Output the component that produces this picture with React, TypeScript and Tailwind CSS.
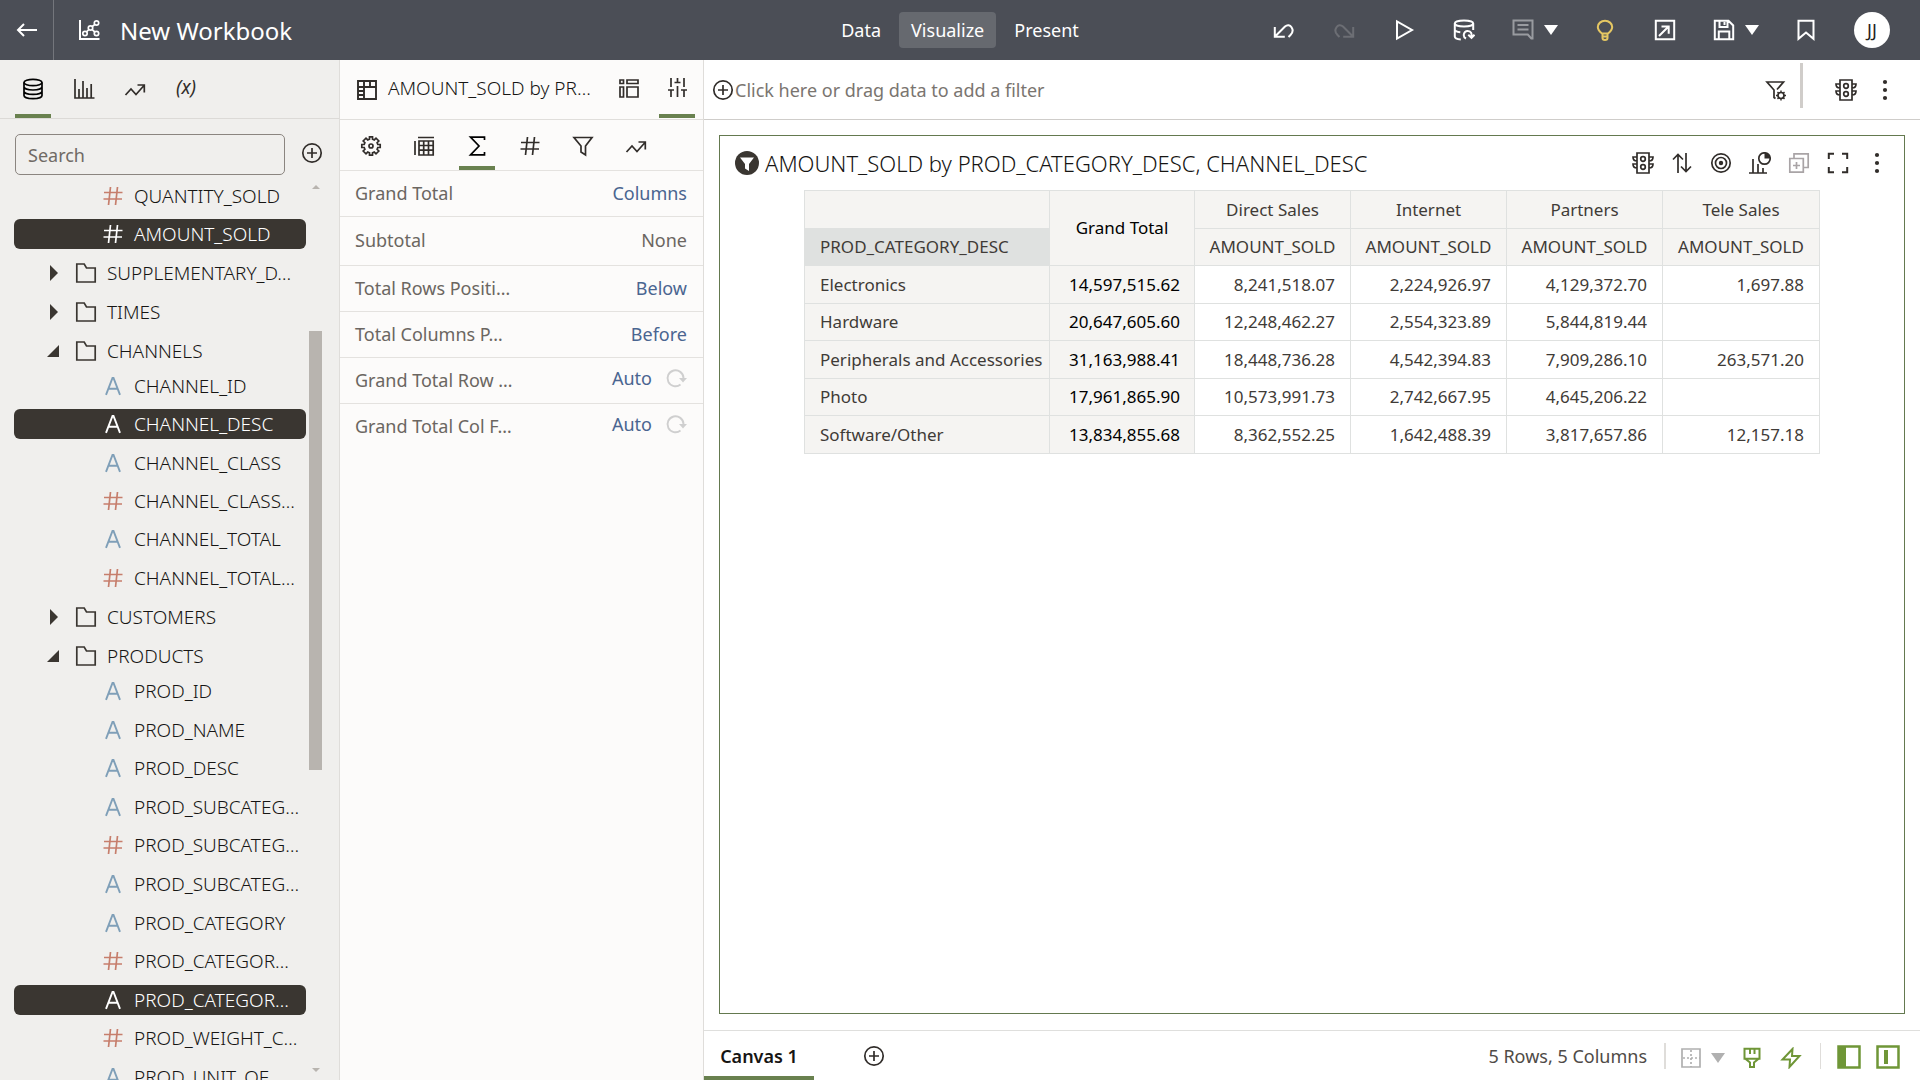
import React from 'react';
import clsx from 'clsx';

type FieldKind = 'text' | 'number';

interface Field {
  name: string;
  kind: FieldKind;
  selected?: boolean;
}

interface Setting {
  label: string;
  value: string;
  muted?: boolean;
  resettable?: boolean;
}

const salesFields: Field[] = [
  { name: 'QUANTITY_SOLD', kind: 'number' },
  { name: 'AMOUNT_SOLD', kind: 'number', selected: true },
];

const channelFields: Field[] = [
  { name: 'CHANNEL_ID', kind: 'text' },
  { name: 'CHANNEL_DESC', kind: 'text', selected: true },
  { name: 'CHANNEL_CLASS', kind: 'text' },
  { name: 'CHANNEL_CLASS…', kind: 'number' },
  { name: 'CHANNEL_TOTAL', kind: 'text' },
  { name: 'CHANNEL_TOTAL…', kind: 'number' },
];

const productFields: Field[] = [
  { name: 'PROD_ID', kind: 'text' },
  { name: 'PROD_NAME', kind: 'text' },
  { name: 'PROD_DESC', kind: 'text' },
  { name: 'PROD_SUBCATEG…', kind: 'text' },
  { name: 'PROD_SUBCATEG…', kind: 'number' },
  { name: 'PROD_SUBCATEG…', kind: 'text' },
  { name: 'PROD_CATEGORY', kind: 'text' },
  { name: 'PROD_CATEGOR…', kind: 'number' },
  { name: 'PROD_CATEGOR…', kind: 'text', selected: true },
  { name: 'PROD_WEIGHT_C…', kind: 'number' },
  { name: 'PROD_UNIT_OF_', kind: 'text' },
];

const settings: Setting[] = [
  { label: 'Grand Total', value: 'Columns' },
  { label: 'Subtotal', value: 'None', muted: true },
  { label: 'Total Rows Positi…', value: 'Below' },
  { label: 'Total Columns P…', value: 'Before' },
  { label: 'Grand Total Row …', value: 'Auto', resettable: true },
  { label: 'Grand Total Col F…', value: 'Auto', resettable: true },
];

const channels = ['Direct Sales', 'Internet', 'Partners', 'Tele Sales'];

const rows = [
  { category: 'Electronics', total: '14,597,515.62', values: ['8,241,518.07', '2,224,926.97', '4,129,372.70', '1,697.88'] },
  { category: 'Hardware', total: '20,647,605.60', values: ['12,248,462.27', '2,554,323.89', '5,844,819.44', ''] },
  { category: 'Peripherals and Accessories', total: '31,163,988.41', values: ['18,448,736.28', '4,542,394.83', '7,909,286.10', '263,571.20'] },
  { category: 'Photo', total: '17,961,865.90', values: ['10,573,991.73', '2,742,667.95', '4,645,206.22', ''] },
  { category: 'Software/Other', total: '13,834,855.68', values: ['8,362,552.25', '1,642,488.39', '3,817,657.86', '12,157.18'] },
];

// ---------- Icons (22px grid) ----------

const Svg = ({ children, className }: { children: React.ReactNode; className?: string }) => (
  <svg
    width="22"
    height="22"
    viewBox="0 0 22 22"
    fill="none"
    stroke="currentColor"
    strokeWidth="1.7"
    className={clsx('shrink-0', className)}
    aria-hidden="true"
  >
    {children}
  </svg>
);

const BackIcon = () => (
  <Svg><path d="M21 11H2M8 5l-6 6 6 6" strokeWidth="2" /></Svg>
);

const WorkbookIcon = () => (
  <Svg>
    <path d="M2 1v19h19.500" strokeWidth="2" />
    <circle cx="7" cy="14.500" r="2.200" />
    <circle cx="12.500" cy="9" r="2.200" />
    <circle cx="18.500" cy="4" r="2.200" />
    <circle cx="18.500" cy="14.500" r="2.200" />
    <path d="M8.500 12.800l2.400-2.300M14.200 7.500L17 5.300M14.200 10.700l2.600 2.300" />
  </Svg>
);

const DatabaseIcon = () => (
  <Svg>
    <ellipse cx="11" cy="4.500" rx="9" ry="3.200" />
    <path d="M2 4.500v13c0 1.800 4 3.200 9 3.200s9-1.400 9-3.200v-13M2 8.800C2 10.600 6 12 11 12s9-1.400 9-3.200M2 13.200c0 1.800 4 3.200 9 3.200s9-1.400 9-3.200" />
  </Svg>
);

const BarsIcon = () => (
  <Svg><path d="M2 1v19h19.500M6 20v-9M10 20V3M14 20V10M18.200 20V6" /></Svg>
);

const TrendIcon = () => (
  <Svg><path d="M1.500 17l5.500-6 5 5.500 8-9M13.500 7H20.300v7.500" /></Svg>
);

const PlusCircleIcon = () => (
  <Svg>
    <circle cx="11" cy="11" r="9.200" />
    <path d="M11 6v10M6 11h10" />
  </Svg>
);

const FolderIcon = () => (
  <Svg><path d="M1.800 20V2h7.400l2.300 4h8.700v14z" /></Svg>
);

const HashIcon = () => (
  <Svg><path d="M8.500 2L6.500 20M15.500 2l-2 18M2 7.500h18.500M1.500 14h18.500" /></Svg>
);

const LetterIcon = () => (
  <Svg><path d="M4 19.800L10.500 3h1L18 19.800M6.300 13.800h9.400" strokeWidth="1.900" /></Svg>
);

const PivotIcon = () => (
  <Svg>
    <path d="M2 2h18v18H2zM8 2v18M2 8h18M14 2v6M2 12h6M2 16h6" strokeWidth="1.900" />
  </Svg>
);

const GrammarIcon = () => (
  <Svg><path d="M2 3h3.500v3.500H2zM9 3h11v3.500H9zM2 10h3.500v10H2zM9 10h11v10H9z" /></Svg>
);

const SlidersIcon = () => (
  <Svg><path d="M5 2v9M5 14.500V21M11.500 2v4M11.500 10v11M18 2v9M18 14.500V21M2 14h6M8.500 6.500h6M15 14h6" /></Svg>
);

const GearIcon = () => (
  <Svg>
    <path d="M9.500 1.800h3v2.400l1.800.7L16 3.200 18.800 6l-1.700 1.700.7 1.800h2.400v3h-2.400l-.7 1.800 1.700 1.700-2.800 2.800-1.700-1.700-1.800.7v2.400h-3v-2.400l-1.800-.7L6 18.800 3.200 16l1.700-1.700-.7-1.800H1.800v-3h2.400l.7-1.800L3.200 6 6 3.200l1.700 1.700 1.800-.7z" />
    <circle cx="11" cy="11" r="2" />
  </Svg>
);

const TableIcon = () => (
  <Svg><path d="M2 6v14M5 2.500h16M6 6h14.200v14H6zM6 10.500h14M6 15.200h14M10.700 6v14M15.500 6v14" /></Svg>
);

const SigmaIcon = () => (
  <Svg><path d="M18.500 5V2.200H4.500L13 11l-8.500 8.800h14V17" /></Svg>
);

const FunnelIcon = () => (
  <Svg><path d="M2 2.500h18l-6.500 8.500v9l-4.500-3v-6z" /></Svg>
);

const FunnelGearIcon = () => (
  <Svg>
    <path d="M12 10.500L18.500 3H2l7 8v7.500l1.500 1" />
    <circle cx="16" cy="16.500" r="3" />
    <path d="M16 11.500v2M16 19.500v2M11 16.500h2M19 16.500h2M12.500 13l1.400 1.400M18.100 18.600l1.400 1.400M19.500 13l-1.400 1.400M13.900 18.600L12.500 20" strokeWidth="1.400" />
  </Svg>
);

const TrafficIcon = () => (
  <Svg>
    <path d="M5 1h12v20H5zM5 5H1c0 3 1.500 4 4 4M5 12H1c0 3 1.500 4 4 4M17 5h4c0 3-1.500 4-4 4M17 12h4c0 3-1.500 4-4 4" />
    <circle cx="11" cy="7" r="2.300" />
    <circle cx="11" cy="15" r="2.300" />
  </Svg>
);

const KebabIcon = () => (
  <Svg>
    <g fill="currentColor" stroke="none">
      <circle cx="11" cy="3" r="2.100" />
      <circle cx="11" cy="11" r="2.100" />
      <circle cx="11" cy="19" r="2.100" />
    </g>
  </Svg>
);

const UndoIcon = ({ flipped }: { flipped?: boolean }) => (
  <Svg className={flipped ? '-scale-x-100' : undefined}>
    <path d="M1.800 8v9.800h10M2.300 17.300L12 7.500c5-4.500 10.500 3.500 5.500 8.500l-2 2" strokeWidth="2" />
  </Svg>
);

const PlayIcon = () => (
  <Svg><path d="M4 2.500v17L19 11z" strokeWidth="2" /></Svg>
);

const RefreshDataIcon = () => (
  <Svg>
    <g strokeWidth="2">
      <ellipse cx="11" cy="4.500" rx="9.200" ry="3" />
      <path d="M1.800 4.500v13c0 1.500 2 2.700 6 3M20.200 4.500V11M1.800 10.500c0 1.500 2 2.300 5.500 2.700" />
      <path d="M13 19.500c-4-2-2-8 2-7.500 3 .2 4 2.500 3.500 6M15.300 15.800l3.200 3 3-3" />
    </g>
  </Svg>
);

const CommentIcon = () => (
  <Svg>
    <path d="M1.500 1.500h19v18h-1.200l-3.500-4H1.500zM5.500 6h11M5.500 10.500h11" strokeWidth="2" />
  </Svg>
);

const BulbIcon = () => (
  <Svg>
    <path d="M8 14.500C5.500 12.500 3.800 11 3.800 8a7.200 6.200 0 0 1 14.400 0c0 3-1.700 4.500-4.200 6.500zM7.500 17.500h7M8.500 14.500v4.500c0 2.500 5 2.500 5 0v-4.500" strokeWidth="2" />
  </Svg>
);

const ExportIcon = () => (
  <Svg><path d="M1.800 1.800h18.400v18.400H1.800zM7.500 7.500h7.200v7.200M14.500 7.500L5 17" strokeWidth="2" /></Svg>
);

const SaveIcon = () => (
  <Svg>
    <path d="M1.800 1.800h13.700l4.700 4.700v13.700H1.800zM6.500 1.800V8h8V1.800M11.500 3v3M5.800 20v-7.500h10.500V20" strokeWidth="2" />
  </Svg>
);

const BookmarkIcon = () => (
  <Svg><path d="M3.500 1.800h15v18L11 13.500l-7.500 6.300z" strokeWidth="2" /></Svg>
);

const SortIcon = () => (
  <Svg><path d="M7 21V2.500M2 7.500l5-5 5 5M15 1v18.500M10 14.500l5 5 5-5" /></Svg>
);

const TargetIcon = () => (
  <Svg>
    <circle cx="11" cy="11" r="9.200" />
    <circle cx="11" cy="11" r="5.500" />
    <circle cx="11" cy="11" r="2.200" fill="currentColor" stroke="none" />
  </Svg>
);

const ChartTypeIcon = () => (
  <Svg>
    <path d="M0 21h18M4 21V7M9 21v-9M14 21v-5" />
    <circle cx="15.500" cy="6.500" r="5.700" />
    <path d="M15.500 6.500V.8a5.700 5.700 0 0 1 5.700 5.700z" fill="currentColor" stroke="none" />
  </Svg>
);

const DuplicateIcon = () => (
  <Svg><path d="M1.800 6.500h13.500v13.700H1.800zM6 6V1.800h14.200V15.500H15.500M8.500 10v7M5 13.500h7" /></Svg>
);

const MaximizeIcon = () => (
  <Svg><path d="M1.800 7V1.800H7M15 1.800h5.200V7M20.200 15v5.200H15M7 20.200H1.800V15" strokeWidth="2" /></Svg>
);

const ResetIcon = () => (
  <Svg>
    <path d="M15.500 17.500A8 8 0 1 1 18.500 11" strokeWidth="1.900" />
    <path d="M14 11h8l-4 4.500z" fill="currentColor" stroke="none" />
  </Svg>
);

const GridIcon = () => (
  <Svg>
    <path d="M2 2h18v18H2z" />
    <path d="M11 3v17M3 11h17" strokeDasharray="2 2" />
  </Svg>
);

const BrushIcon = () => (
  <Svg><path d="M3.500 1.800h15v10h-15zM9 2v5M13.500 2v5M4 11.500l5 4v4.500h4v-4.500l5-4" strokeWidth="2" /></Svg>
);

const BoltIcon = () => (
  <Svg><path d="M12.500 2L2.500 12.500H10L9.500 20l10-11H12z" strokeWidth="2" /></Svg>
);

const CaretIcon = () => (
  <svg width="14" height="10" viewBox="0 0 14 10" fill="currentColor" aria-hidden="true">
    <path d="M0 0h14L7 10z" />
  </svg>
);

const FilterBadge = () => (
  <svg width="24" height="24" viewBox="0 0 24 24" aria-hidden="true">
    <circle cx="12" cy="12" r="12" fill="#3a3631" />
    <path d="M5 6.500h14l-5 6.500v7l-4-2.500V13z" fill="#fff" />
  </svg>
);

const LeftPanelIcon = () => (
  <svg width="24" height="24" viewBox="0 0 24 24" fill="none" aria-hidden="true">
    <path d="M1.500 1.500h21v21h-21z" stroke="#6f9637" strokeWidth="2.500" />
    <path d="M1 1h8v22H1z" fill="#6f9637" />
  </svg>
);

const MiddlePanelIcon = () => (
  <svg width="24" height="24" viewBox="0 0 24 24" fill="none" aria-hidden="true">
    <path d="M1.500 1.500h21v21h-21z" stroke="#6f9637" strokeWidth="2.500" />
    <path d="M8 5h4v14H8z" fill="#6f9637" />
  </svg>
);

// ---------- Shared ----------

interface IconButtonProps {
  label: string;
  className?: string;
  children: React.ReactNode;
}

const IconButton = ({ label, className, children }: IconButtonProps) => (
  <button type="button" aria-label={label} className={clsx('flex items-center justify-center', className)}>
    {children}
  </button>
);

// ---------- Header ----------

const Header = () => (
  <header className="grid h-[60px] shrink-0 grid-cols-[1fr_auto_1fr] items-center bg-[#4b4e56] text-white">
    <div className="flex h-full items-center">
      <IconButton label="Go back" className="h-full w-[54px] border-r border-[#74767c]">
        <BackIcon />
      </IconButton>
      <div className="flex items-center gap-5 pl-6">
        <WorkbookIcon />
        <h1 className="pt-0.5 text-[24px] leading-8">New Workbook</h1>
      </div>
    </div>

    <nav className="flex items-center gap-[6px] text-[18px] leading-6">
      <button type="button" className="h-9 px-3">Data</button>
      <button type="button" className="h-9 rounded-sm bg-[#66696f] px-3">Visualize</button>
      <button type="button" className="h-9 px-3">Present</button>
    </nav>

    <div className="flex items-center justify-end pr-[30px]">
      <IconButton label="Undo" className="w-[60px]"><UndoIcon /></IconButton>
      <IconButton label="Redo" className="w-[60px] text-[#6c6e74]"><UndoIcon flipped /></IconButton>
      <IconButton label="Preview" className="w-[60px]"><PlayIcon /></IconButton>
      <IconButton label="Refresh data" className="w-[60px]"><RefreshDataIcon /></IconButton>
      <IconButton label="Notes" className="w-[81px] gap-[10px]">
        <span className="text-[#999ba0]"><CommentIcon /></span>
        <CaretIcon />
      </IconButton>
      <IconButton label="Insights" className="w-[60px] text-[#e5c763]"><BulbIcon /></IconButton>
      <IconButton label="Export" className="w-[60px]"><ExportIcon /></IconButton>
      <IconButton label="Save" className="w-[81px] gap-[10px]">
        <SaveIcon />
        <CaretIcon />
      </IconButton>
      <IconButton label="Bookmark" className="w-[60px]"><BookmarkIcon /></IconButton>
      <button
        type="button"
        aria-label="Account"
        className="ml-[18px] h-9 w-9 rounded-full bg-white text-[18px] text-[#25221e]"
      >
        JJ
      </button>
    </div>
  </header>
);

// ---------- Data panel ----------

const FieldRow = ({ field }: { field: Field }) => (
  <li className="flex items-center">
    <button
      type="button"
      className={clsx(
        'flex h-[30px] w-full items-center gap-[10px] rounded-md pl-[88px] text-left',
        field.selected ? 'bg-[#3a3631] text-white' : 'text-[#161513]'
      )}
    >
      <span className={clsx(!field.selected && (field.kind === 'number' ? 'text-[#c67e6c]' : 'text-[#7f9fb8]'))}>
        {field.kind === 'number' ? <HashIcon /> : <LetterIcon />}
      </span>
      <span className="whitespace-nowrap">{field.name}</span>
    </button>
  </li>
);

const FolderRow = ({ name, open }: { name: string; open?: boolean }) => (
  <button type="button" aria-expanded={!!open} className="flex h-[39px] w-full items-center pl-8 text-left">
    <svg width="14" height="16" viewBox="0 0 14 16" fill="#3a3631" aria-hidden="true">
      {open ? <path d="M13 2v12H1z" /> : <path d="M4 0l8 8-8 8z" />}
    </svg>
    <span className="ml-[15px] mr-[10px] text-[#3a3631]"><FolderIcon /></span>
    <span className="whitespace-nowrap">{name}</span>
  </button>
);

const DataPanel = () => (
  <aside className="flex w-[340px] shrink-0 flex-col border-r border-[#dfddda] bg-[#f0efed] text-[#161513]">
    <div className="flex h-[59px] shrink-0 items-stretch gap-[15px] border-b border-[#dcdad7] pl-[15px] text-[#312d2a]">
      <IconButton label="Data" className="w-9 border-b-4 border-[#69814f] pt-1 text-black">
        <DatabaseIcon />
      </IconButton>
      <IconButton label="Visualizations" className="w-9"><BarsIcon /></IconButton>
      <IconButton label="Analytics" className="w-9"><TrendIcon /></IconButton>
      <button type="button" aria-label="Parameters" className="w-9 pb-1 text-[19px] italic">
        (x)
      </button>
    </div>

    <div className="flex shrink-0 items-center gap-4 pl-[15px] pr-4 pt-[15px]">
      <input
        type="text"
        aria-label="Search"
        placeholder="Search"
        className="h-[41px] w-[270px] rounded-[5px] border border-[#8b8580] bg-transparent px-3 text-[18px] placeholder:text-[#6f6a65]"
      />
      <IconButton label="Add data" className="pb-1 text-[#312d2a]"><PlusCircleIcon /></IconButton>
    </div>

    <div className="flex min-h-0 flex-1 pl-[14px] pr-4 pt-0.5 text-[19px] font-light leading-6">
      <div className="w-[292px] overflow-hidden">
        <ul className="grid h-[76px] auto-rows-fr">
          {salesFields.map((f, i) => <FieldRow key={i} field={f} />)}
        </ul>
        <FolderRow name="SUPPLEMENTARY_D…" />
        <FolderRow name="TIMES" />
        <FolderRow name="CHANNELS" open />
        <ul className="-mt-[3px] grid h-[230px] auto-rows-fr">
          {channelFields.map((f, i) => <FieldRow key={i} field={f} />)}
        </ul>
        <FolderRow name="CUSTOMERS" />
        <FolderRow name="PRODUCTS" open />
        <ul className="-mt-[3px] grid h-[424px] auto-rows-fr">
          {productFields.map((f, i) => <FieldRow key={i} field={f} />)}
        </ul>
      </div>

      {/* Scrollbar */}
      <div className="ml-[3px] flex w-[13px] flex-col items-center py-2 text-[#b8b4af]">
        <svg width="8" height="4" viewBox="0 0 8 4" fill="currentColor" aria-hidden="true">
          <path d="M0 4h8L4 0z" />
        </svg>
        <div className="mt-[142px] h-[439px] w-full shrink-0 bg-[#b8b4af]" />
        <svg className="mt-auto" width="8" height="4" viewBox="0 0 8 4" fill="currentColor" aria-hidden="true">
          <path d="M0 0h8L4 4z" />
        </svg>
      </div>
    </div>
  </aside>
);

// ---------- Properties panel ----------

const PropertiesPanel = () => (
  <section className="flex w-[364px] shrink-0 flex-col border-r border-[#dfddda] bg-[#fcfbfa] text-[#312d2a]">
    <div className="flex h-[60px] shrink-0 items-stretch border-b border-[#e0dedb] pl-4 pr-2">
      <div className="flex flex-1 items-center gap-[10px]">
        <PivotIcon />
        <h2 className="whitespace-nowrap pb-1 text-[19px] font-light leading-6 text-[#161513]">AMOUNT_SOLD by PR…</h2>
      </div>
      <IconButton label="Grammar" className="w-9 pb-1"><GrammarIcon /></IconButton>
      <IconButton label="Properties" className="mb-px ml-3 w-9 border-b-4 border-[#69814f]">
        <SlidersIcon />
      </IconButton>
    </div>

    <div className="flex h-[51px] shrink-0 items-stretch gap-[17px] border-b border-[#e4e2df] pl-[13px] pt-0.5">
      <IconButton label="General" className="w-9"><GearIcon /></IconButton>
      <IconButton label="Grid" className="w-9"><TableIcon /></IconButton>
      <IconButton label="Totals" className="w-9 border-b-4 border-[#69814f] pt-1 text-black"><SigmaIcon /></IconButton>
      <IconButton label="Values" className="w-9"><HashIcon /></IconButton>
      <IconButton label="Filters" className="w-9"><FunnelIcon /></IconButton>
      <IconButton label="Analytics" className="w-9"><TrendIcon /></IconButton>
    </div>

    <dl className="text-[18px] leading-6">
      {settings.map((s) => (
        <div
          key={s.label}
          className={clsx(
            'flex items-center justify-between border-b border-[#e4e2df] pb-0.5 pl-[15px] pr-4 last:border-b-0',
            s.muted ? 'h-[49px]' : 'h-[46px]'
          )}
        >
          <dt className="text-[#6b6661]">{s.label}</dt>
          <dd className={clsx('flex items-center gap-[13px]', s.resettable && 'pb-1')}>
            <button type="button" className={s.muted ? 'text-[#6b6661]' : 'text-[#4a6590]'}>{s.value}</button>
            {s.resettable && (
              <IconButton label={`Reset ${s.label}`} className="text-[#cfcfcf]"><ResetIcon /></IconButton>
            )}
          </dd>
        </div>
      ))}
    </dl>
  </section>
);

// ---------- Canvas ----------

const FilterBar = () => (
  <div className="flex h-[60px] shrink-0 items-center border-b border-[#cfcdca] pl-2 pr-6 text-[#312d2a]">
    <button type="button" className="flex items-center gap-px">
      <PlusCircleIcon />
      <span className="text-[18px] leading-6 text-[#7a7570]">Click here or drag data to add a filter</span>
    </button>
    <IconButton label="Filter settings" className="ml-auto"><FunnelGearIcon /></IconButton>
    <div className="mb-2 ml-[13px] h-[45px] w-[3px] bg-[#d0cdca]" />
    <IconButton label="Auto apply" className="ml-8"><TrafficIcon /></IconButton>
    <IconButton label="Filter menu" className="ml-[17px]"><KebabIcon /></IconButton>
  </div>
);

const PivotTable = () => (
  <table className="ml-[84px] w-[1016px] table-fixed border-collapse text-[17px] leading-6 text-[#3f3b37]">
    <colgroup>
      <col className="w-[245px]" />
      <col className="w-[145px]" />
      <col className="w-[156px]" />
      <col className="w-[156px]" />
      <col className="w-[156px]" />
      <col className="w-[157px]" />
    </colgroup>
    <thead className="bg-[#f5f4f2]">
      <tr className="h-[38px]">
        <td className="border-l border-t border-[#dfe1e0]" />
        <th rowSpan={2} scope="col" className="border border-[#dfe1e0] font-normal text-black">Grand Total</th>
        {channels.map((c) => (
          <th key={c} scope="col" className="border border-[#dfe1e0] font-normal">{c}</th>
        ))}
      </tr>
      <tr className="h-[37px]">
        <th scope="col" className="border border-[#dfe1e0] bg-[#dfe1e0] pl-[15px] text-left font-normal">PROD_CATEGORY_DESC</th>
        {channels.map((c) => (
          <th key={c} scope="col" className="border border-[#dfe1e0] font-normal">AMOUNT_SOLD</th>
        ))}
      </tr>
    </thead>
    <tbody>
      {rows.map((row, i) => (
        <tr key={row.category} className={i % 2 === 0 ? 'h-[38px]' : 'h-[37px]'}>
          <th scope="row" className="whitespace-nowrap border border-[#dfe1e0] bg-[#f5f4f2] pl-[15px] text-left font-normal">{row.category}</th>
          <td className="border border-[#dfe1e0] bg-[#f5f4f2] pr-[14px] text-right text-black">{row.total}</td>
          {row.values.map((v, j) => (
            <td key={j} className="border border-[#dfe1e0] pr-[15px] text-right">{v}</td>
          ))}
        </tr>
      ))}
    </tbody>
  </table>
);

const Visualization = () => (
  <section className="min-h-0 flex-1 border border-[#64794f]">
    <div className="flex h-[54px] items-center pl-[15px] pr-4 text-[#312d2a]">
      <FilterBadge />
      <h2 className="ml-1.5 text-[22px] font-light leading-7 text-[#161513]">
        AMOUNT_SOLD by PROD_CATEGORY_DESC, CHANNEL_DESC
      </h2>
      <div className="ml-auto flex items-center gap-[17px]">
        <IconButton label="Auto apply"><TrafficIcon /></IconButton>
        <IconButton label="Sort"><SortIcon /></IconButton>
        <IconButton label="Drill"><TargetIcon /></IconButton>
        <IconButton label="Change chart type"><ChartTypeIcon /></IconButton>
        <IconButton label="Duplicate" className="text-[#a9a4a6]"><DuplicateIcon /></IconButton>
        <IconButton label="Maximize"><MaximizeIcon /></IconButton>
        <IconButton label="Menu"><KebabIcon /></IconButton>
      </div>
    </div>
    <PivotTable />
  </section>
);

const Footer = () => (
  <footer className="flex h-[50px] shrink-0 items-center border-t border-[#dfdfdd] pr-5">
    <button type="button" className="h-full w-[110px] border-b-4 border-[#69814f] pt-1 text-[18px] font-semibold leading-6 text-[#161513]">
      Canvas 1
    </button>
    <IconButton label="Add canvas" className="ml-[49px] text-[#312d2a]"><PlusCircleIcon /></IconButton>

    <span className="ml-auto text-[18px] leading-6 text-[#4f4b47]">5 Rows, 5 Columns</span>
    <div className="ml-[17px] h-[26px] w-0.5 bg-[#dfddda]" />
    <IconButton label="Grid lines" className="ml-3.5 gap-[9px] pt-1 text-[#b0b0b0]">
      <GridIcon />
      <CaretIcon />
    </IconButton>
    <IconButton label="Brushing" className="ml-4 pt-1 text-[#6f9637]"><BrushIcon /></IconButton>
    <IconButton label="Auto refresh" className="ml-[17px] pt-1 text-[#6f9637]"><BoltIcon /></IconButton>
    <div className="ml-[18px] h-[26px] w-px bg-[#dfddda]" />
    <IconButton label="Toggle data panel" className="ml-4 pt-0.5"><LeftPanelIcon /></IconButton>
    <IconButton label="Toggle grammar panel" className="ml-[15px] pt-0.5"><MiddlePanelIcon /></IconButton>
  </footer>
);

export default function App() {
  return (
    <div className="flex h-screen flex-col overflow-hidden bg-white font-['Noto_Sans','Open_Sans',sans-serif]">
      <Header />
      <div className="flex min-h-0 flex-1">
        <DataPanel />
        <PropertiesPanel />
        <main className="flex min-w-0 flex-1 flex-col">
          <FilterBar />
          <div className="flex min-h-0 flex-1 flex-col px-[15px] pb-4 pt-[15px]">
            <Visualization />
          </div>
          <Footer />
        </main>
      </div>
    </div>
  );
}
